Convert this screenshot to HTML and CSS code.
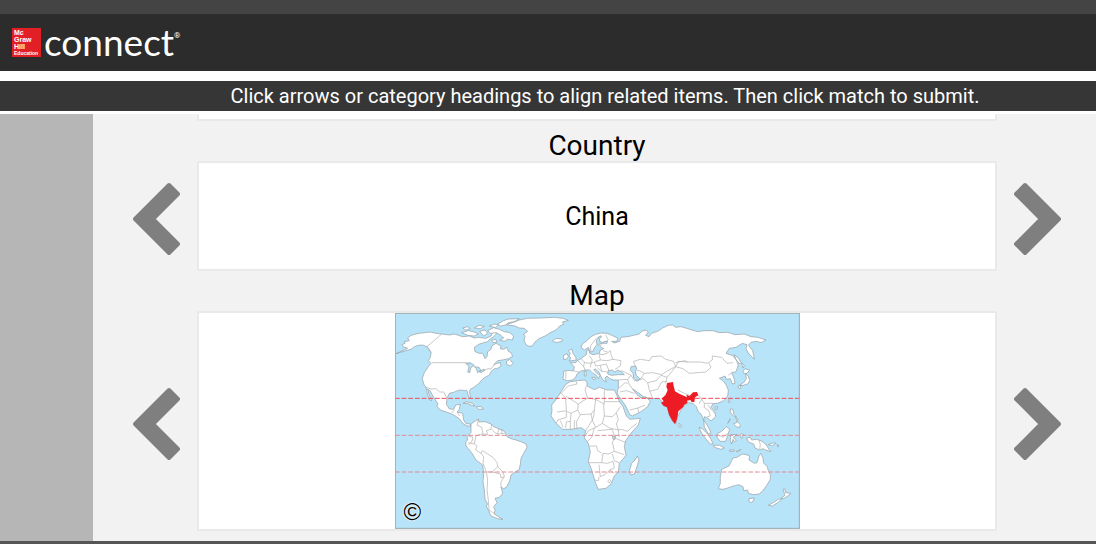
FILE: index.html
```html
<!DOCTYPE html>
<html lang="en">
<head>
  <meta charset="UTF-8">
  <title>Connect</title>
  <meta name="viewport" content="width=device-width, initial-scale=1.0">
  <link rel="stylesheet" href="styles.css">
</head>
<body>

<div class="topbar"></div>
<header class="header">
  <a class="brand" href="#">
    <span class="badge">Mc<br>Graw<br>Hill<br><small>Education</small></span>
    <span class="wordmark">connect</span><span class="reg">®</span>
  </a>
</header>

<p class="instructions">Click arrows or category headings to align related items. Then click match to submit.</p>

<div class="layout">
  <aside class="sidebar"></aside>

  <main class="board">
    <div class="row">
      <div class="card card-cut"></div>
    </div>

    <h2 class="category"><button type="button">Country</button></h2>
    <div class="row">
      <button class="arrow" type="button" aria-label="Previous country">
        <svg viewBox="0 0 47 74"><path d="M36 3L2 37L36 71L45 62L20 37L45 12Z"/></svg>
      </button>
      <div class="card">China</div>
      <button class="arrow" type="button" aria-label="Next country">
        <svg viewBox="0 0 47 74"><path d="M11 3L45 37L11 71L2 62L27 37L2 12Z"/></svg>
      </button>
    </div>

    <h2 class="category"><button type="button">Map</button></h2>
    <div class="row">
      <button class="arrow" type="button" aria-label="Previous map">
        <svg viewBox="0 0 47 74"><path d="M36 3L2 37L36 71L45 62L20 37L45 12Z"/></svg>
      </button>
      <div class="card">
        <div class="map">
          <svg viewBox="12 9 1215 648" role="img" aria-label="World map with India highlighted">
            <rect class="sea" x="12" y="9" width="1215" height="648"/>

            <!-- Americas -->
            <g class="land">
              <path d="M15 131L50 115L36 110L33 104L42 100L40 95L55 92L50 84L60 76L75 72L85 70L118 66L135 70L152 72L175 75L190 72L215 80L235 78L250 84L262 82L285 85L300 78L304 68L312 62L316 72L308 80L298 86L290 95L265 102L250 112L252 125L264 130L275 130L282 146L288 140L290 125L300 118L302 108L315 100L330 108L328 116L338 118L348 112L352 124L362 130L364 140L352 146L334 150L320 152L308 164L318 160L328 158L330 168L318 176L310 176L300 185L296 194L284 201L275 207L262 222L248 232L238 238L235 245L239 262L233 262L228 242L205 240L190 246L175 250L168 265L166 282L175 297L188 298L194 285L208 283L204 300L198 306L215 310L218 330L225 341L238 342L240 348L228 348L215 340L205 326L190 316L175 309L150 301L138 290L140 280L128 262L118 243L110 237L114 254L122 272L116 270L110 256L105 232L98 222L94 205L100 188L112 170L120 160L112 152L118 142L120 130L114 118L108 110L95 105L82 106L70 110L60 118L38 124Z"/>
              <path d="M240 342L250 335L262 327L264 336L282 335L300 342L308 350L318 354L340 364L348 380L360 386L375 390L392 396L405 402L408 412L398 430L390 445L388 462L385 478L372 486L360 495L356 513L346 532L338 536L330 531L335 550L325 562L312 565L318 578L308 590L312 600L310 612L322 620L336 628L320 626L300 618L292 600L286 588L290 582L282 568L280 540L276 515L278 490L275 465L255 450L243 430L232 416L225 408L224 396L230 390L228 380L240 368L240 355Z"/>
              <path d="M212 68L232 62L250 66L262 72L250 78L230 76ZM215 54L230 50L238 56L224 60ZM250 54L264 46L280 49L268 56ZM266 64L282 60L290 70L278 78ZM290 62L308 53L325 58L340 65L356 68L368 78L364 90L350 88L340 94L326 90L338 84L330 76L316 68L298 70ZM295 48L310 42L322 45L314 53ZM320 42L338 32L352 27L385 26L372 34L352 38L345 45L328 48ZM302 90L314 88L318 96L306 98ZM346 155L356 148L366 160L358 168L348 164ZM216 280L226 275L244 280L252 288L242 286L228 280ZM256 290L270 290L278 297L262 298Z"/>
              <path d="M345 44L368 37L385 30L410 25L450 24L490 22L516 25L532 31L514 36L518 43L506 48L495 60L480 67L462 78L444 86L432 96L424 108L414 109L404 103L399 90L402 80L398 72L410 64L400 55L385 54L372 48Z"/>
            </g>
            <path class="sea lake" d="M224 160L238 158L250 166L240 172L236 188L230 186L234 170ZM250 170L264 172L270 182L260 188L256 176ZM264 184L278 178L282 180L270 188Z"/>
            <path class="border" d="M152 72L108 110L122 128M122 158L222 158L238 162M275 184L290 176L300 177L310 164M105 232L120 237L135 236L146 246L158 246L168 264M182 309L190 300M198 306L206 318M262 328L258 345L272 352L276 372L262 374L254 380L250 402L232 398M276 372L290 374L286 362L300 358L302 342M302 358L312 368L320 372L324 354M320 372L340 370M333 356L332 370M250 402L258 408L254 420L270 430L274 422L290 432L306 442L318 458L320 470L304 486L286 486L276 460L278 440L270 430M320 470L336 486L340 500L330 504L328 492L304 486M340 500L330 516L330 532M286 486L290 510L288 540L292 570L294 600L312 612M232 378L246 382L242 396L232 404"/>

            <!-- Europe, Asia and Africa -->
            <g transform="translate(420 0)">
              <g class="land">
                <path d="M65 92L75 85L92 87L95 93L80 97L68 96ZM112 122L122 117L126 130L134 142L136 150L114 153L120 144L114 138L118 130ZM98 136L108 131L112 140L106 148L98 148ZM319 438L324 450L318 470L310 492L300 495L295 484L302 460L312 450ZM182 202L192 202L194 207L186 208ZM160 184L165 184L165 198L160 198Z"/>
                <path d="M98 184L112 181L128 183L130 170L118 158L134 158L138 152L150 146L160 138L166 134L168 120L174 120L176 130L186 134L205 130L208 120L218 116L208 110L202 104L210 100L228 100L230 92L214 97L206 94L206 86L212 80L204 80L196 92L198 104L190 114L186 124L178 126L172 112L160 120L150 112L154 102L168 92L180 80L194 73L210 69L228 70L242 76L260 84L258 94L242 94L250 99L266 94L270 82L290 80L308 76L325 72L332 64L345 60L352 66L344 76L354 80L362 70L380 64L395 54L412 46L425 45L434 52L450 50L470 56L500 65L520 62L545 62L565 68L590 67L612 74L640 72L660 80L680 82L705 90L690 98L676 94L660 97L652 106L665 122L670 148L654 132L645 116L648 104L634 100L615 112L595 115L585 130L605 137L616 150L622 165L615 185L602 188L609 205L612 220L604 222L598 206L586 208L582 198L565 205L576 212L585 224L592 240L590 258L578 272L560 280L546 281L540 292L552 306L554 320L540 333L530 324L520 320L518 330L530 348L540 368L532 372L520 350L518 330L510 312L502 306L496 290L486 280L474 278L462 284L450 300L440 320L434 342L424 334L415 315L408 290L395 276L384 266L362 265L340 262L324 250L304 236L318 254L330 264L344 260L358 274L350 290L330 305L304 318L297 314L284 288L268 265L258 250L262 234L262 210L248 210L236 206L228 198L222 204L226 216L216 210L208 196L205 187L192 176L188 180L198 190L207 196L202 206L196 196L184 188L176 180L162 180L148 184L138 192L134 202L124 210L110 212L96 208Z"/>
                <path d="M105 222L118 215L140 212L162 210L168 218L168 228L190 239L205 232L228 240L250 240L256 252L266 276L276 290L286 318L296 328L328 325L322 345L300 370L284 392L280 410L285 436L265 460L262 485L250 498L240 522L225 535L202 538L194 520L182 480L172 455L178 425L172 400L160 384L164 362L150 353L120 358L95 358L75 340L60 318L63 302L62 285L78 265L90 245Z"/>
              </g>
              <path class="sea lake" d="M232 182L244 180L252 186L260 180L272 186L280 194L262 194L240 196L230 192ZM300 170L314 168L318 178L312 182L316 196L328 208L318 214L308 204L306 190L298 180ZM244 378L253 378L252 388L246 388Z"/>
              <path class="border" d="M112 228L138 222L136 214M112 228L88 252M92 250L104 266L106 302L78 306M104 258L142 282L170 264L162 240L166 228M170 264L194 268L220 282L220 240M220 275L266 275M142 282L140 300L120 310L106 304M194 268L190 300L180 312L148 314L140 300M190 300L188 318L184 330L194 352L214 340L220 318L218 282M220 318L244 320L256 308L268 290M214 340L236 354L262 360L270 358L290 364L302 352L318 340M256 308L262 330L256 342L262 360M180 312L184 330L164 362M148 314L136 336L138 356M106 304L106 322L80 330M120 310L118 334L106 336L104 354M118 334L118 358M130 330L130 356M80 330L76 340M88 332L96 352M194 352L172 362L162 378M190 354L182 382L168 396M200 362L244 358L252 384L244 396L250 424L232 432L216 430L212 458L172 458M176 408L196 408L200 422L212 430M252 384L284 398M250 424L280 434M244 432L250 452L264 458M212 458L230 460L246 454L250 474L236 480L222 494L208 500L204 464M204 500L202 512L190 510M236 480L250 490M236 508L240 514L234 519L230 513ZM262 360L264 380M105 184L104 206M130 184L146 186M150 146L160 156L158 170L164 182M138 150L158 170M174 136L184 150L180 160L160 158M204 132L208 150L190 156L180 160L178 172M208 150L228 152L246 148L270 152L268 168L252 178M228 130L238 122L240 134L246 148M216 122L230 126M208 108L212 100M190 156L194 168L208 166L212 184L200 174M208 166L226 162L234 182M212 184L232 186M205 132L216 134L228 130M180 124L178 108L192 90L210 76M224 74L232 90M262 210L290 208L300 196L284 188L270 182M290 208L294 222L304 236M264 234L282 218L290 220M266 246L286 242L310 250M296 300L320 294L342 286M320 294L324 308M300 196L310 212L336 206L350 218L356 244L364 262M314 172L308 154L328 148L356 152L362 140L390 138L404 148L428 154L434 170L410 182L392 194L364 188L340 190L326 182L318 182M328 208L340 190M350 218L376 212L390 196L408 202M356 244L380 238L392 216L408 214M434 158L462 152L470 156L510 156L530 160L544 150L544 138L572 142L588 160L606 158M470 156L442 154L434 170L456 176L474 190L524 186L540 172L534 160M434 170L420 188L408 202L404 220M440 240L460 250L476 256L484 254M502 256L512 268L520 280L546 280M512 268L504 282M520 280L520 292L534 304L538 318L528 320M530 284L542 300L552 310M602 188L592 196"/>
            </g>

            <!-- Islands, Australia and New Zealand -->
            <g class="land" transform="translate(810 0)">
              <path d="M219 134L232 144L240 158L236 162L226 150ZM242 158L250 166L246 174ZM246 184L252 176L266 180L258 190L248 190ZM254 192L262 198L266 212L260 222L246 226L236 226L250 216L256 206ZM232 228L240 226L238 236L232 234ZM203 266L208 264L206 278L202 276ZM162 291L170 290L168 298L163 298ZM54 340L60 344L60 351L54 350ZM208 297L216 298L218 312L226 320L218 318L208 308ZM218 342L230 336L238 344L236 352L226 350ZM224 322L232 328L228 334ZM200 340L207 326L206 334Z"/>
              <path d="M114 352L124 356L140 372L150 388L156 402L148 402L134 386L122 370ZM158 406L176 406L190 414L180 418L160 412ZM170 370L182 364L196 350L206 358L200 376L194 394L178 394L168 382ZM210 374L228 374L216 382L226 390L220 396L216 388L212 402L208 392ZM206 420L220 420L218 424L206 424ZM226 424L240 418L232 426ZM257 384L268 382L272 390L286 388L300 392L314 402L324 418L330 424L318 422L306 416L296 420L282 414L278 402L262 396ZM322 404L338 398L344 400L332 408ZM348 403L354 408L350 410ZM241 370L248 374L242 386L238 376Z"/>
              <path d="M216 444L228 442L244 432L256 434L266 438L264 450L280 460L288 458L294 438L299 430L306 444L308 460L318 468L322 482L328 494L328 508L316 528L304 544L294 552L276 554L262 550L260 540L248 542L246 530L234 524L216 528L200 534L186 538L172 536L178 520L178 500L182 478L204 468Z"/>
              <path d="M264 566L280 564L276 574L270 578L264 574ZM366 538L371 536L374 548L390 550L380 558L368 566L362 564L372 556ZM322 586L340 576L352 568L364 566L350 578L334 588Z"/>
            </g>
            <path class="border" d="M1104 390L1108 404L1106 418M984 376L996 382L1010 370"/>

            <path class="tropic strong" d="M12 265H1227"/>
            <path class="tropic" d="M12 376H1227M12 486H1227"/>
            <path class="india" d="M828 219L846 216L848 228L852 244L866 252L880 258L888 262L886 254L896 258L906 247L918 246L922 256L912 262L910 276L902 276L898 270L888 272L890 278L880 284L876 292L862 304L860 318L856 334L852 342L844 332L834 314L828 292L818 288L810 278L818 274L812 266L824 254L830 240L826 230Z"/>
            <rect class="frame" x="13" y="10" width="1212" height="645"/>
          </svg>
          <button class="copyright" type="button" aria-label="Copyright">©</button>
        </div>
      </div>
      <button class="arrow" type="button" aria-label="Next map">
        <svg viewBox="0 0 47 74"><path d="M11 3L45 37L11 71L2 62L27 37L2 12Z"/></svg>
      </button>
    </div>
  </main>
</div>

<footer class="footer"></footer>

</body>
</html>
```
FILE: styles.css
```css
* {
  box-sizing: border-box;
}
body {
  margin: 0;
  min-height: 100vh;
  display: flex;
  flex-direction: column;
  background: #fff;
  color: #000;
  font-family: Roboto, sans-serif;
}
button {
  padding: 0;
  border: none;
  background: none;
  color: inherit;
  font: inherit;
  cursor: pointer;
}
.topbar {
  height: 14px;
  background: #444;
}
.header {
  padding: 14px 12px;
  background: #2c2c2c;
}
.brand {
  display: flex;
  height: 29px;
  color: #fff;
  text-decoration: none;
}
.badge {
  width: 29px;
  padding: 1px 2px;
  background: #e31f26;
  font: bold 7px/7px "Liberation Sans", sans-serif;
}
.badge small {
  display: block;
  font-size: 5px;
  line-height: 6px;
}
.wordmark {
  margin-left: 3px;
  font: 37px/27px Lato, sans-serif;
}
.reg {
  padding-top: 4px;
  font-size: 8px;
  line-height: 8px;
}
.instructions {
  margin: 10px 0 3px;
  padding-left: 114px;
  background: #363636;
  color: #fff;
  font-size: 20px;
  line-height: 30px;
  text-align: center;
}
.layout {
  flex: 1;
  display: flex;
}
.sidebar {
  width: 93px;
  background: #b6b6b6;
}
.board {
  flex: 1;
  padding: 0 35px 10px 40px;
  background: #f2f2f2;
}
.row {
  display: flex;
  justify-content: center;
  gap: 17px;
}
.card {
  flex: 1;
  display: flex;
  align-items: center;
  justify-content: center;
  min-height: 110px;
  border: 2px solid #e9e9e9;
  border-radius: 2px;
  background: #fff;
  font-size: 25px;
}
.card-cut {
  min-height: 7px;
  margin: 0 64px;
  border-top: none;
}
.category {
  margin: 0;
  padding-top: 9px;
  font-size: 28px;
  font-weight: normal;
  line-height: 31px;
  text-align: center;
}
.arrow {
  width: 47px;
  padding-top: 5px;
}
.arrow svg {
  display: block;
  width: 100%;
  fill: #7f7f7f;
  stroke: #7f7f7f;
  stroke-width: 4;
  stroke-linejoin: round;
}
.map {
  position: relative;
  width: 405px;
}
.map svg {
  display: block;
  width: 100%;
}
.sea {
  fill: #b8e4f9;
}
.land {
  fill: #fff;
  stroke: #949ca0;
  stroke-width: 2;
  stroke-linejoin: round;
}
.lake {
  stroke: #949ca0;
  stroke-width: 2;
}
.border {
  fill: none;
  stroke: #adadad;
  stroke-width: 2;
}
.india {
  fill: #ed1c24;
}
.tropic {
  stroke: #e28a94;
  stroke-width: 3;
  stroke-dasharray: 14 6;
}
.strong {
  stroke: #f04c58;
}
.frame {
  fill: none;
  stroke: #a0a9ae;
  stroke-width: 3;
}
/* sits over the lower left corner of the map */
.copyright {
  position: absolute;
  left: 9px;
  bottom: 4px;
  font: 24px/26px "Liberation Sans", sans-serif;
  text-shadow: 0 0 2px #fff, 0 0 2px #fff;
}
.footer {
  height: 3px;
  background: #555;
}
```
